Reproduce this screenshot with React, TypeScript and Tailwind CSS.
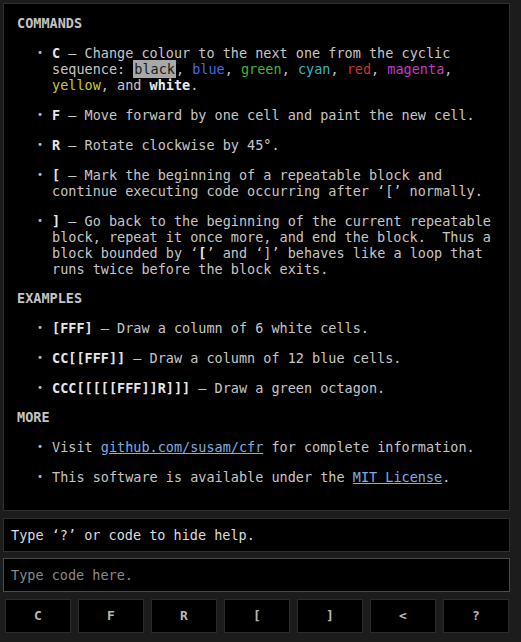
const mono = "font-['DejaVu_Sans_Mono','Liberation_Mono',monospace]";

const BUTTONS = ["C", "F", "R", "[", "]", "<", "?"];

function Item({ children }: { children: React.ReactNode }) {
  return (
    <li className="flex mt-[14px]">
      <span className="w-[35px] shrink-0 text-right pr-[9px] text-[10px] text-[#bdbdbd]">•</span>
      <span className="flex-1">{children}</span>
    </li>
  );
}

function Heading({ children }: { children: React.ReactNode }) {
  return <h2 className="font-bold text-[#c4c4c4]">{children}</h2>;
}

export default function App() {
  return (
    <div className={`min-h-screen bg-[#1c1c1c] ${mono} text-[13.5px] leading-[16px] text-[#c6c6c6]`}>
      <div className="w-[510px] pl-[3px] pt-[3px] flex flex-col">
        {/* help */}
        <div className="bg-black border border-[#303030] pt-[11px] pb-[25px] pl-[13px] pr-[10px]">
          <Heading>COMMANDS</Heading>
          <ul className="mb-[13px]">
            <Item>
              <b className="text-[#e6e6e6]">C</b> – Change colour to the next one from the cyclic
              sequence: <span className="bg-[#a8a8a8] text-[#1a1a1a] px-[1px] py-[1px]">black</span>,{" "}
              <span className="text-[#3d6bea]">blue</span>, <span className="text-[#45b335]">green</span>,{" "}
              <span className="text-[#36b6c2]">cyan</span>, <span className="text-[#c9372c]">red</span>,{" "}
              <span className="text-[#c53ac8]">magenta</span>, <span className="text-[#c9c83a]">yellow</span>, and{" "}
              <b className="text-[#ececec]">white</b>.
            </Item>
            <Item>
              <b className="text-[#e6e6e6]">F</b> – Move forward by one cell and paint the new cell.
            </Item>
            <Item>
              <b className="text-[#e6e6e6]">R</b> – Rotate clockwise by 45°.
            </Item>
            <Item>
              <b className="text-[#e6e6e6]">[</b> – Mark the beginning of a repeatable block and
              continue executing code occurring after ‘[’ normally.
            </Item>
            <Item>
              <b className="text-[#e6e6e6]">]</b> – Go back to the beginning of the current repeatable
              block, repeat it once more, and end the block.&nbsp; Thus a block bounded by ‘<b className="text-[#e6e6e6]">[</b>’
              and ‘]’ behaves like a loop that runs twice before the block exits.
            </Item>
          </ul>
          <Heading>EXAMPLES</Heading>
          <ul className="mb-[13px]">
            <Item>
              <b className="text-[#e6e6e6]">[FFF]</b> – Draw a column of 6 white cells.
            </Item>
            <Item>
              <b className="text-[#e6e6e6]">CC[[FFF]]</b> – Draw a column of 12 blue cells.
            </Item>
            <Item>
              <b className="text-[#e6e6e6]">CCC[[[[[FFF]]R]]]</b> – Draw a green octagon.
            </Item>
          </ul>
          <Heading>MORE</Heading>
          <ul>
            <Item>
              Visit <a className="text-[#7aaee6] underline" href="#">github.com/susam/cfr</a> for complete
              information.
            </Item>
            <Item>
              This software is available under the{" "}
              <a className="text-[#7aaee6] underline" href="#">MIT License</a>.
            </Item>
          </ul>
        </div>

        {/* status */}
        <div className="mt-[7px] h-[34px] bg-black border border-[#303030] flex items-center px-[7px] text-[#dcdcdc]">
          Type ‘?’ or code to hide help.
        </div>

        {/* input */}
        <input
          className={`mt-[6px] h-[34px] bg-black border border-[#4a4a4a] px-[7px] text-[#dcdcdc] placeholder:text-[#8a8a8a] outline-none ${mono} text-[13.5px]`}
          placeholder="Type code here."
        />

        {/* buttons */}
        <div className="mt-[7px] pl-[2px] pr-[1px] grid grid-cols-7 gap-[7px]">
          {BUTTONS.map((b) => (
            <button
              key={b}
              className={`h-[34px] bg-black border border-[#2c2c2c] font-bold text-[#b8b8b8] ${mono} text-[13px]`}
            >
              {b}
            </button>
          ))}
        </div>
      </div>
    </div>
  );
}
